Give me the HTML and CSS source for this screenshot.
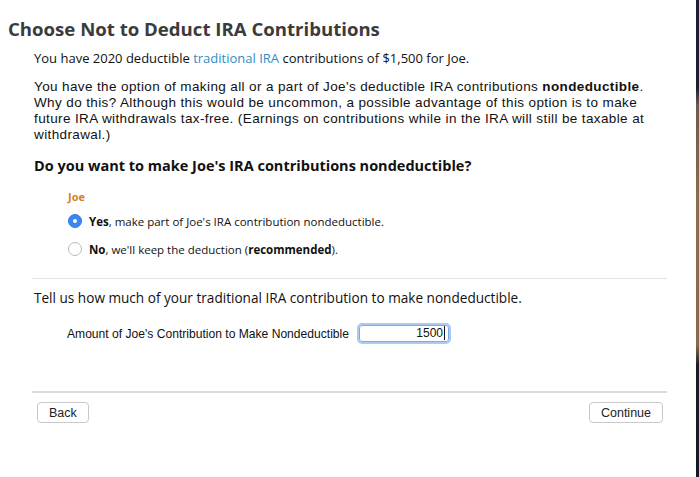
FILE: index.html
```html
<!DOCTYPE html>
<html lang="en">
<head>
  <meta charset="UTF-8" />
  <meta name="viewport" content="width=device-width, initial-scale=1.0" />
  <title>Choose Not to Deduct IRA Contributions</title>
  <link rel="stylesheet" href="styles.css">
</head>
<body>
  <div class="window">
    <main class="page">
      <h1 class="title">Choose Not to Deduct IRA Contributions</h1>

      <div class="content">
        <p class="intro">You have 2020 deductible <a class="link" href="#">traditional IRA</a> contributions of $1,500 for Joe.</p>

        <p class="explain">You have the option of making all or a part of Joe's deductible IRA contributions <b>nondeductible</b>. Why do this? Although this would be uncommon, a possible advantage of this option is to make future IRA withdrawals tax-free. (Earnings on contributions while in the IRA will still be taxable at withdrawal.)</p>

        <h2 class="question">Do you want to make Joe's IRA contributions nondeductible?</h2>

        <div class="choices">
          <div class="person">Joe</div>
          <label class="choice">
            <span class="radio checked"></span>
            <span><b>Yes</b>, make part of Joe's IRA contribution nondeductible.</span>
          </label>
          <label class="choice">
            <span class="radio"></span>
            <span><b>No</b>, we'll keep the deduction (<b>recommended</b>).</span>
          </label>
        </div>
      </div>

      <hr class="rule">

      <div class="content">
        <p class="ask">Tell us how much of your traditional IRA contribution to make nondeductible.</p>
        <div class="field">
          <label class="field-label" for="amount">Amount of Joe's Contribution to Make Nondeductible</label>
          <div class="amount" id="amount">1500<span class="caret"></span></div>
        </div>
      </div>

      <hr class="rule thick">

      <div class="nav">
        <button class="btn">Back</button>
        <button class="btn">Continue</button>
      </div>
    </main>
    <div class="edge"></div>
  </div>
</body>
</html>
```

FILE: styles.css
```css
body {
  margin: 0;
  background: #ffffff;
  font-family: "Open Sans", "DejaVu Sans", sans-serif;
  color: #111111;
}

.window {
  display: flex;
  height: 477px;
}

.page {
  flex: 1;
  display: flex;
  flex-direction: column;
}

.edge {
  width: 3px;
  background: linear-gradient(to bottom, #1b2031 0, #1b2031 88px, #6e5a4a 105px, #8c6c4c 200px, #8a6a4a 345px, #191d2a 365px, #141824 100%);
}

.title {
  margin: 18px 0 0 8px;
  font-size: 18.6px;
  line-height: 22px;
  font-weight: 700;
  color: #3b3b3b;
}

.content {
  margin-left: 34px;
}

.intro {
  margin: 10px 0 0;
  font-size: 13px;
  line-height: 16px;
}

.link {
  color: #2e8fc4;
  text-decoration: none;
}

.explain {
  width: 620px;
  margin: 13px 0 0;
  font-family: "Liberation Sans", sans-serif;
  font-size: 13.5px;
  letter-spacing: 0.38px;
  line-height: 16px;
}

.question {
  margin: 13px 0 0;
  font-size: 14.5px;
  line-height: 20px;
  font-weight: 700;
}

.choices {
  margin: 14px 0 0 34px;
  display: flex;
  flex-direction: column;
  gap: 8px;
}

.person {
  font-size: 11px;
  line-height: 14px;
  font-weight: 700;
  color: #d4822a;
  margin-bottom: -1px;
}

.choice {
  display: flex;
  align-items: center;
  gap: 7px;
  height: 20px;
  font-size: 11.5px;
}

.radio {
  width: 12px;
  height: 12px;
  border: 1px solid #b9b9b9;
  border-radius: 50%;
  background: #ffffff;
  display: flex;
  align-items: center;
  justify-content: center;
}

.radio.checked {
  background: #3a86f0;
  border-color: #3479dd;
}

.radio.checked::after {
  content: "";
  width: 4px;
  height: 4px;
  border-radius: 50%;
  background: #ffffff;
}

.rule {
  margin: 19px 29px 0 32px;
  border: none;
  border-top: 1px solid #e2e2e2;
}

.ask {
  margin: 11px 0 0;
  font-size: 13.6px;
  line-height: 16px;
}

.field {
  margin: 19px 0 0 33px;
  display: flex;
  align-items: center;
  gap: 10px;
}

.field-label {
  font-size: 12.1px;
  font-family: "Liberation Sans", sans-serif;
}

.amount {
  width: 85px;
  height: 15px;
  padding: 0 3px 0 0;
  border: 1px solid #7fa9e2;
  box-shadow: 0 0 0 2px #adcbf2;
  border-radius: 3px;
  font-family: "Liberation Sans", sans-serif;
  font-size: 12px;
  line-height: 15px;
  text-align: right;
}

.caret {
  display: inline-block;
  width: 1px;
  height: 14px;
  margin-left: 1px;
  vertical-align: -3px;
  background: #111111;
}

.rule.thick {
  margin-top: 49px;
  border-top: 2px solid #dcdcdc;
}

.nav {
  margin: 9px 33px 0 37px;
  display: flex;
  justify-content: space-between;
}

.btn {
  height: 21px;
  padding: 0 11px;
  border: 1px solid #c9c9c9;
  border-radius: 4px;
  background: #ffffff;
  font-family: "Liberation Sans", sans-serif;
  font-size: 12.5px;
  color: #222222;
}
```
